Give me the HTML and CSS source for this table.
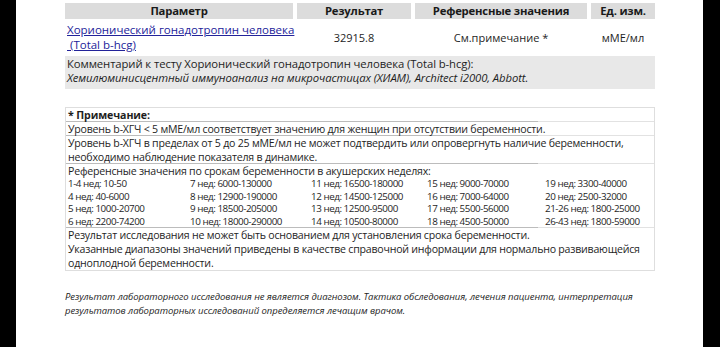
FILE: index.html
```html
<!DOCTYPE html>
<html lang="ru">
<head>
<meta charset="utf-8">
<title>Хорионический гонадотропин человека</title>
<link rel="stylesheet" href="styles.css">
</head>
<body>
<div class="page">
  <div class="results">
    <div class="th">Параметр</div>
    <div class="th">Результат</div>
    <div class="th">Референсные значения</div>
    <div class="th">Ед. изм.</div>
    <div class="td td-name"><a href="#" class="test-link">Хорионический гонадотропин человека<br>&nbsp;(Total b-hcg)</a></div>
    <div class="td td-center">32915.8</div>
    <div class="td td-center">См.примечание *</div>
    <div class="td td-center">мМЕ/мл</div>
    <div class="comment">
      <div>Комментарий к тесту Хорионический гонадотропин человека (Total b-hcg):</div>
      <div class="method">Хемилюминисцентный иммуноанализ на микрочастицах (ХИАМ), Architect i2000, Abbott.</div>
    </div>
  </div>

  <div class="note">
    <div class="note-row note-title">* Примечание:</div>
    <div class="note-row">Уровень b-ХГЧ &lt; 5 мМЕ/мл соответствует значению для женщин при отсутствии беременности.</div>
    <div class="note-row">Уровень b-ХГЧ в пределах от 5 до 25 мМЕ/мл не может подтвердить или опровергнуть наличие беременности,<br>необходимо наблюдение показателя в динамике.</div>
    <div class="note-row">
      <div>Референсные значения по срокам беременности в акушерских неделях:</div>
      <div class="weeks">
        <span>1-4 нед: 10-50</span><span>7 нед: 6000-130000</span><span>11 нед: 16500-180000</span><span>15 нед: 9000-70000</span><span>19 нед: 3300-40000</span>
        <span>4 нед: 40-6000</span><span>8 нед: 12900-190000</span><span>12 нед: 14500-125000</span><span>16 нед: 7000-64000</span><span>20 нед: 2500-32000</span>
        <span>5 нед: 1000-20700</span><span>9 нед: 18500-205000</span><span>13 нед: 12500-95000</span><span>17 нед: 5500-56000</span><span>21-26 нед: 1800-25000</span>
        <span>6 нед: 2200-74200</span><span>10 нед: 18000-290000</span><span>14 нед: 10500-80000</span><span>18 нед: 4500-50000</span><span>26-43 нед: 1800-59000</span>
      </div>
    </div>
    <div class="note-row note-last">Результат исследования не может быть основанием для установления срока беременности.<br>Указанные диапазоны значений приведены в качестве справочной информации для нормально развивающейся<br>одноплодной беременности.</div>
  </div>

  <p class="disclaimer">Результат лабораторного исследования не является диагнозом. Тактика обследования, лечения пациента, интерпретация<br>результатов лабораторных исследований определяется лечащим врачом.</p>
</div>
</body>
</html>
```

FILE: styles.css
```css
html, body {
  margin: 0;
  padding: 0;
  background: #000;
}

.page {
  margin-left: 16px;
  width: 687px;
  height: 347px;
  background: #fff;
  overflow: hidden;
  font-family: "Open Sans", "Noto Sans", sans-serif;
  color: #1e1e1e;
  padding-top: 3px;
  box-sizing: border-box;
}

.results {
  margin-left: 49px;
  width: 590px;
  display: grid;
  grid-template-columns: 228px 114px 172px 64px;
  column-gap: 4px;
}

.th {
  background: #dcdcdc;
  font-weight: 700;
  font-size: 11.3px;
  letter-spacing: -0.2px;
  line-height: 16px;
  height: 16px;
  text-align: center;
  color: #1a1a1a;
}

.td {
  font-size: 11px;
  line-height: 15px;
  padding: 3px 0 3px;
}

.td-name {
  padding-left: 2px;
  white-space: nowrap;
}

.td-center {
  text-align: center;
  align-self: center;
}

.test-link {
  color: #23239a;
  text-decoration: underline;
  font-size: 11.5px;
  letter-spacing: 0;
}

.comment {
  grid-column: 1 / -1;
  background: #e8e8e8;
  font-size: 11.3px;
  letter-spacing: -0.1px;
  line-height: 14px;
  padding: 1px 2px 4px;
  margin-top: 1px;
}

.method {
  font-style: italic;
}

.note {
  margin: 18px 0 0 49px;
  width: 590px;
  border: 1px solid #dedede;
  box-sizing: border-box;
  font-size: 10.6px;
  letter-spacing: -0.22px;
  line-height: 14px;
}

.note-row {
  padding: 0 2px;
  background-image: linear-gradient(to right, #bcbcbc 0, #bcbcbc 472px, #e2e2e2 472px);
  background-size: 100% 1px;
  background-position: left bottom;
  background-repeat: no-repeat;
}

.note-title {
  font-weight: 700;
  letter-spacing: -0.1px;
}

.note-last {
  background: none;
}

.weeks {
  display: grid;
  grid-template-columns: 122px 121px 116px 118px auto;
  font-size: 9.8px;
  letter-spacing: -0.45px;
  line-height: 12.5px;
}

.disclaimer {
  margin: 19px 0 0 49px;
  font-size: 9.5px;
  line-height: 14px;
  font-style: italic;
  letter-spacing: -0.05px;
  color: #1e1e1e;
}
```
